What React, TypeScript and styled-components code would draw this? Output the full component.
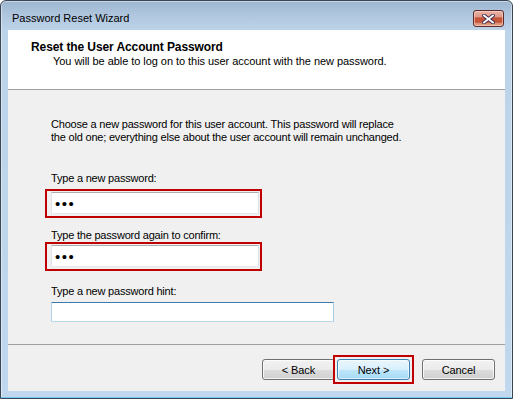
import React from 'react';
import styled, {createGlobalStyle, css} from "styled-components";

const GlobalStyle = createGlobalStyle`
  html, body {
    margin: 0;
    padding: 0;
    background: #ffffff;
  }

  body {
    font-family: "Liberation Sans", Arial, sans-serif;
    font-size: 11px;
    color: #000;
  }
`

const Window = styled.div`
  box-sizing: border-box;
  width: 513px;
  height: 399px;
  display: flex;
  flex-direction: column;
  border: 1px solid #3a4653;
  border-radius: 6px 6px 0 0;
  background: linear-gradient(to bottom, #9db6d0 0px, #afc6de 14px, #bdd3ea 30px, #c0d7ee 100%);
  box-shadow: inset 0 -1px 0 #74cdf0, inset 0 0 0 1px rgba(255, 255, 255, 0.45);
`

const TitleBar = styled.div`
  height: 29px;
  display: flex;
  justify-content: space-between;
  align-items: flex-start;
  padding: 0 8px 0 11px;
`

const Caption = styled.span`
  margin-top: 11px;
  line-height: 13px;
  font-size: 11px;
  color: #000;
`

const CloseButton = styled.button`
  box-sizing: border-box;
  margin-top: 9px;
  width: 31px;
  height: 17px;
  padding: 0;
  display: flex;
  align-items: center;
  justify-content: center;
  border: 1px solid #5e2a2a;
  border-radius: 3px;
  background: linear-gradient(to bottom,
  #eab3a6 0%, #dc9a8a 40%, #c65537 45%, #c2543a 75%, #d98a70 80%, #e0a38c 100%);
  box-shadow: inset 0 0 0 1px rgba(255, 220, 210, 0.55);
`

const Client = styled.div`
  flex: 1;
  margin: 0 7px 7px 7px;
  background: #f0f0f0;
  display: flex;
  flex-direction: column;
`

const Header = styled.div`
  box-sizing: border-box;
  height: 60px;
  background: #ffffff;
  border-bottom: 1px solid #a0a0a0;
  padding: 10px 0 0 23px;
`

const HeaderTitle = styled.div`
  font-size: 12px;
  font-weight: bold;
  line-height: 14px;
  letter-spacing: -0.1px;
`

const HeaderText = styled.div`
  margin-top: 1px;
  padding-left: 22px;
  line-height: 13px;
  letter-spacing: -0.05px;
`

const Body = styled.div`
  height: 254px;
  box-sizing: border-box;
  padding: 28px 0 0 43px;
`

const Intro = styled.p`
  margin: 0;
  line-height: 13px;
  letter-spacing: -0.2px;
`

const Label = styled.label<{ $gap: number }>`
  display: block;
  margin-top: ${props => props.$gap}px;
  line-height: 13px;
  letter-spacing: -0.2px;
`

const Highlight = styled.div<{ $top: number }>`
  box-sizing: border-box;
  width: 217px;
  height: 29px;
  margin: ${props => props.$top}px 0 0 -6px;
  padding: 1px 1px 2px 4px;
  border: 2px solid #c00000;
`

const TextBox = styled.input<{ $active?: boolean }>`
  box-sizing: border-box;
  display: block;
  margin: 0;
  outline: none;
  background: #ffffff;
  border: 1px solid;
  border-color: #abadb3 #dbdfe6 #e3e9ef #e2e3ea;
  border-radius: 1px;
  font-family: "Liberation Sans", Arial, sans-serif;

  ${props => props.$active && css`
    border-color: #3d7bad #a4c9e3 #b7d9ed #b5cfe7;
  `}
`

const PasswordBox = styled(TextBox)`
  width: 208px;
  height: 22px;
  padding: 0 3px;
  font-size: 15px;
  letter-spacing: 1.5px;
  color: #000;
`

const HintBox = styled(TextBox)`
  width: 283px;
  height: 20px;
  margin-top: 4px;
  padding: 0 3px;
  font-size: 11px;
`

const Footer = styled.div`
  flex: 1;
  border-top: 1px solid #a0a0a0;
  padding: 10px 10px 0 0;
`

const ButtonRow = styled.div`
  height: 29px;
  display: flex;
  justify-content: flex-end;
  align-items: center;
`

const Button = styled.button<{ $primary?: boolean }>`
  box-sizing: border-box;
  width: 73px;
  height: 21px;
  padding: 0;
  border: 1px solid #707070;
  border-radius: 3px;
  font-family: "Liberation Sans", Arial, sans-serif;
  font-size: 11px;
  letter-spacing: -0.1px;
  color: #000;
  background: linear-gradient(to bottom, #f2f2f2 0%, #ebebeb 50%, #dddddd 51%, #cfcfcf 100%);
  box-shadow: inset 0 0 0 1px rgba(255, 255, 255, 0.75);

  ${props => props.$primary && css`
    border-color: #3c7fb1;
    background: linear-gradient(to bottom, #eaf6fd 0%, #d9f0fc 50%, #bee6fd 51%, #a7d9f5 100%);
    box-shadow: inset 0 0 0 1px rgba(255, 255, 255, 0.6);
  `}
`

const NextHighlight = styled.div`
  margin-left: -2px;
  padding: 2px;
  border: 2px solid #c00000;
  display: flex;
`

const CancelButton = styled(Button)`
  margin-left: 8px;
`

export default function App() {
    return (
        <>
            <GlobalStyle/>
            <Window>
                <TitleBar>
                    <Caption>Password Reset Wizard</Caption>
                    <CloseButton aria-label="Close">
                        <svg width="13" height="10" viewBox="0 0 13 10">
                            <path d="M2 1.5 L11 8.5 M11 1.5 L2 8.5" stroke="#3d2b4f" strokeWidth="3.6"
                                  strokeLinecap="square"/>
                            <path d="M2 1.5 L11 8.5 M11 1.5 L2 8.5" stroke="#ffffff" strokeWidth="1.8"
                                  strokeLinecap="square"/>
                        </svg>
                    </CloseButton>
                </TitleBar>
                <Client>
                    <Header>
                        <HeaderTitle>Reset the User Account Password</HeaderTitle>
                        <HeaderText>You will be able to log on to this user account with the new password.</HeaderText>
                    </Header>
                    <Body>
                        <Intro>
                            Choose a new password for this user account. This password will replace<br/>
                            the old one; everything else about the user account will remain unchanged.
                        </Intro>

                        <Label $gap={28}>Type a new password:</Label>
                        <Highlight $top={4}>
                            <PasswordBox type="password" value="abc" readOnly/>
                        </Highlight>

                        <Label $gap={11}>Type the password again to confirm:</Label>
                        <Highlight $top={0}>
                            <PasswordBox type="password" value="abc" readOnly/>
                        </Highlight>

                        <Label $gap={14}>Type a new password hint:</Label>
                        <HintBox $active type="text" defaultValue=""/>
                    </Body>
                    <Footer>
                        <ButtonRow>
                            <Button>&lt; Back</Button>
                            <NextHighlight>
                                <Button $primary>Next &gt;</Button>
                            </NextHighlight>
                            <CancelButton>Cancel</CancelButton>
                        </ButtonRow>
                    </Footer>
                </Client>
            </Window>
        </>
    );
}
